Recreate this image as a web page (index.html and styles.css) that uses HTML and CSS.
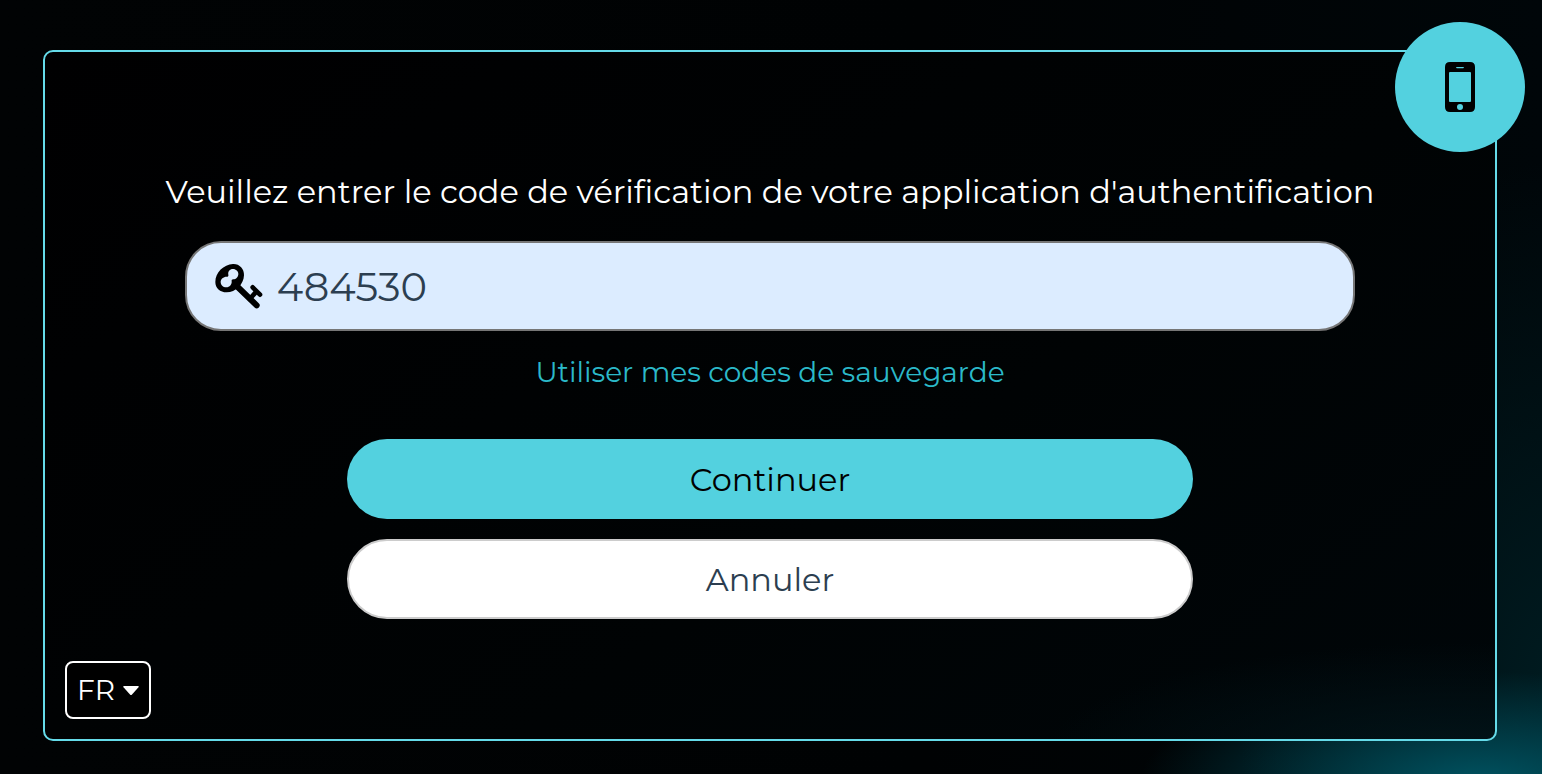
FILE: index.html
```html
<!DOCTYPE html>
<html lang="fr">
<head>
<meta charset="utf-8">
<meta name="viewport" content="width=device-width, initial-scale=1">
<title>Code de vérification</title>
<link rel="stylesheet" href="styles.css">
</head>
<body class="page">
<main class="panel">
  <div class="badge">
    <svg class="badge-icon" viewBox="0 0 30 50" aria-hidden="true">
      <path fill-rule="evenodd" d="M5 0H25Q30 0 30 5V45Q30 50 25 50H5Q0 50 0 45V5Q0 0 5 0ZM5 10Q4 10 4 11V39Q4 40 5 40H25Q26 40 26 39V11Q26 10 25 10ZM12 5Q11 5 11 5.600Q11 6.200 12 6.200H18Q19 6.200 19 5.600Q19 5 18 5ZM15 42A3 3 0 1 0 15 48A3 3 0 1 0 15 42Z"/>
    </svg>
  </div>
  <form class="form">
    <label class="prompt" for="code">Veuillez entrer le code de vérification de votre application d'authentification</label>
    <div class="field">
      <svg class="key" viewBox="44 26 144 138" aria-hidden="true">
        <g class="key-line">
          <path class="shaft" d="M106 92L169 153"/>
          <path class="bit" d="M157 99L179 121M148 134L168 112"/>
        </g>
        <path fill-rule="evenodd" d="M98 29C117 28 132 43 131 63C130 91 106 114 79 114C59 114 45 101 45 83C45 55 70 30 98 29ZM98 44C88 44 82 52 84 61C85 65 83 67 79 67C69 67 61 74 61 83C61 92 68 99 78 99C88 99 95 91 94 81C93 77 95 75 99 75C107 75 114 68 114 59C114 51 107 44 98 44Z"/>
      </svg>
      <input class="code" id="code" type="text" inputmode="numeric" value="484530">
    </div>
    <a class="backup" href="#">Utiliser mes codes de sauvegarde</a>
    <div class="actions">
      <button class="button primary" type="submit">Continuer</button>
      <button class="button secondary" type="button">Annuler</button>
    </div>
  </form>
  <div class="language">
    <select class="language-select" aria-label="Langue">
      <option>FR</option>
    </select>
    <svg class="caret" viewBox="0 0 16 9" aria-hidden="true"><path d="M1 0H15Q16.500 0 15.500 1.200L9 8.400Q8 9.400 7 8.400L.5 1.200Q-.5 0 1 0Z"/></svg>
  </div>
</main>
</body>
</html>
```
FILE: styles.css
```css
* {
  box-sizing: border-box;
}

.page {
  display: flex;
  min-height: 100vh;
  margin: 0;
  padding: 50px 45px 33px 43px;
  font-family: Montserrat, Inter, "Open Sans", sans-serif;
  font-weight: 400;
  color: #fff;
  background:
    radial-gradient(ellipse 340px 110px at 96% 101%, #005260, transparent),
    radial-gradient(ellipse 320px 520px at 101% 88%, #001b20, transparent),
    linear-gradient(90deg, #010304, #000203 60%, #000609);
}

.panel {
  position: relative;
  display: flex;
  flex: 1;
  flex-direction: column;
  justify-content: space-between;
  padding: 116px 20px 20px;
  border: 2px solid #65dbe9;
  border-radius: 10px;
  background:
    radial-gradient(ellipse 420px 110px at 98% 102%, #021419, transparent),
    linear-gradient(145deg, #000001, #000304 60%, #000609);
}

.badge {
  position: absolute;
  top: -30px;
  right: -30px;
  display: grid;
  place-items: center;
  width: 130px;
  height: 130px;
  border-radius: 50%;
  background: #53d1df;
}

.badge-icon {
  width: 30px;
  height: 50px;
  fill: #000;
}

.form {
  display: flex;
  flex-direction: column;
  align-items: center;
}

.prompt {
  font-size: 32px;
  line-height: 48px;
  text-align: center;
}

.field {
  display: flex;
  align-items: center;
  gap: 14px;
  width: 83%;
  height: 90px;
  margin-top: 25px;
  padding: 0 28px;
  border: 2px solid #767676;
  border-radius: 36px;
  background: #dcecff;
}

.key {
  flex: none;
  width: 48px;
  height: 46px;
}

.key-line {
  fill: none;
  stroke: #000;
  stroke-linecap: round;
}

.shaft {
  stroke-width: 18px;
}

.bit {
  stroke-width: 14px;
}

.code {
  flex: 1;
  min-width: 0;
  padding: 0;
  border: 0;
  outline: 0;
  font-family: inherit;
  font-size: 40px;
  color: #2c3e50;
  background: transparent;
}

.backup {
  margin-top: 21px;
  font-size: 28px;
  line-height: 40px;
  color: #2bb9c9;
  text-decoration: none;
}

.actions {
  display: grid;
  gap: 20px;
  width: 60%;
  margin-top: 47px;
}

.button {
  height: 80px;
  padding: 0;
  border: 0;
  border-radius: 40px;
  font-family: inherit;
  font-size: 32px;
}

.primary {
  color: #000;
  background: #53d1df;
}

.secondary {
  border: 2px solid #ccc;
  color: #2c3e50;
  background: #fff;
}

.language {
  display: grid;
  align-items: center;
  justify-items: end;
  align-self: flex-start;
}

.language-select {
  grid-area: 1 / 1;
  width: 86px;
  height: 58px;
  padding: 0 10px;
  border: 2px solid #fff;
  border-radius: 8px;
  font-family: inherit;
  font-size: 28px;
  color: #fff;
  background: #000;
  appearance: none;
}

.caret {
  grid-area: 1 / 1;
  width: 16px;
  height: 9px;
  margin-right: 12px;
  fill: #fff;
  pointer-events: none;
}
```
